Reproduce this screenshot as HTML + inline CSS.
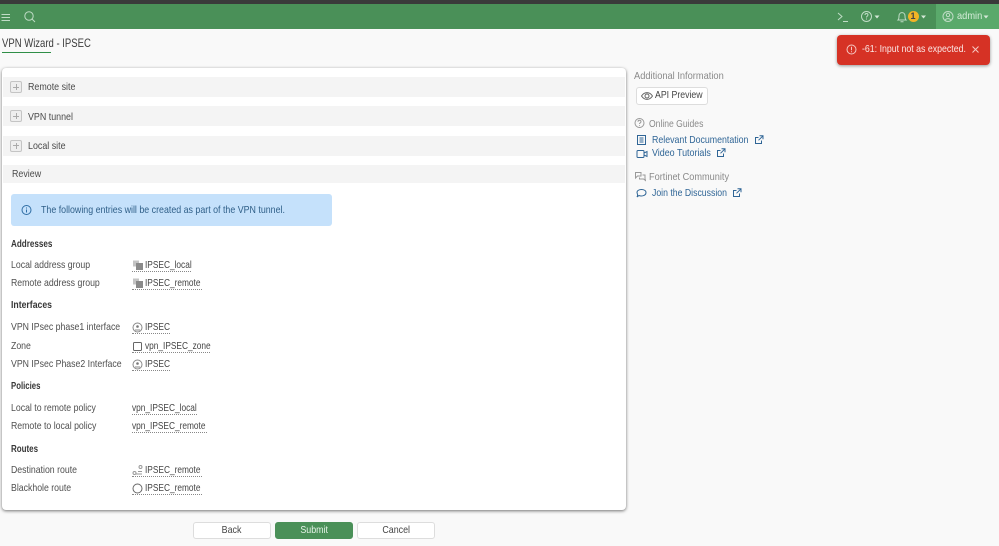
<!DOCTYPE html>
<html><head><meta charset="utf-8"><style>
html,body{margin:0;padding:0;width:999px;height:546px;overflow:hidden;background:#f9f9f9;font-family:"Liberation Sans",sans-serif;font-size:10.400px;color:#4a4a4a}
.a{position:absolute;white-space:nowrap;line-height:12px;transform-origin:0 50%;transform:scaleX(calc(var(--s,.89)*.96))}
.box{position:absolute}
.lab{position:absolute;left:11px;margin-top:1px;white-space:nowrap;line-height:12px;color:#4f4f4f;transform-origin:0 50%;transform:scaleX(.84)}
.hd{position:absolute;left:11px;margin-top:0.500px;white-space:nowrap;line-height:12px;color:#383838;font-weight:bold;transform-origin:0 50%;transform:scaleX(calc(var(--s,.82)*.96))}
.val{position:absolute;left:132px;margin-top:1px;height:11px;line-height:12px;white-space:nowrap;color:#444;border-bottom:1px dotted #888}
.val span{position:absolute;left:13px;top:0;transform-origin:0 50%;transform:scaleX(.8)}
.val svg{position:absolute;left:0;top:0}
.sec{position:absolute;left:3px;width:622px;height:20px;background:#f4f4f4}
.sec b{position:absolute;left:25px;top:4px;font-weight:normal;line-height:12px;color:#4a4a4a;transform-origin:0 50%;transform:scaleX(.855);margin-top:1px}
.pl{position:absolute;left:7px;top:4px;width:10px;height:10px;border:1px solid #c4c4c4;border-radius:2px;background:#eee}
.pl:before{content:"";position:absolute;left:2px;top:4.500px;width:6px;height:1px;background:#aaa}
.pl:after{content:"";position:absolute;left:4.500px;top:2px;width:1px;height:6px;background:#aaa}
.btn{position:absolute;top:522px;width:76px;height:15px;border:1px solid #ddd;border-radius:3px;background:#fff;text-align:center;line-height:16px;color:#444}
.btn span{display:inline-block;transform:scaleX(.855)}
.lnk{color:#2f6596}
</style></head><body>
<div class="box" style="left:0;top:0;width:999px;height:4px;background:#3a3a3a"></div>
<div class="box" style="left:0;top:4px;width:999px;height:25px;background:#4a9058"></div>
<div class="box" style="left:936px;top:4px;width:63px;height:25px;background:#5aa96b"></div>
<svg class="box" style="left:0;top:4px" width="999" height="25" fill="none" stroke="#c0dcc6" stroke-width="1">
<path d="M1.500 10.500h8.500M1.500 13.500h8.500M1.500 16.500h8.500"/>
<circle cx="29" cy="12" r="4.200"/><path d="M32 15l3 3"/>
<path d="M838 9l4 3.500-4 3.500M843 17.500h5"/>
<circle cx="866.500" cy="12.500" r="5"/>
<path d="M865 11c0-2 3-2 3 0 0 1-1.500 1-1.500 2.500M866.500 14.500v1"/>
<path d="M874.500 11.500h5l-2.500 3z" fill="#d5e8d8" stroke="none"/>
<path d="M898 16c1-1 1-2 1-4 0-4.500 6-4.500 6 0 0 2 0 3 1 4zM900.500 17.800h3"/>
<path d="M921 11.500h5l-2.500 3z" fill="#d5e8d8" stroke="none"/>
<circle cx="948" cy="12.500" r="5"/><circle cx="948" cy="11" r="1.700"/><path d="M945 16.500c1-2.500 5-2.500 6 0"/>
<path d="M983.500 11.500h5l-2.500 3z" fill="#d5e8d8" stroke="none"/>
</svg>
<div class="box" style="left:907.500px;top:11px;width:11px;height:11px;border-radius:50%;background:#f2b426;color:#444;font-size:9px;line-height:11px;text-align:center;font-weight:bold">1</div>
<div class="a" style="left:956.500px;top:11px;color:#d5ecd9;--s:.93">admin</div>

<div class="a" style="left:2px;top:36px;font-size:12px;line-height:14px;color:#3c3c3c;--s:.826">VPN Wizard - IPSEC</div>
<div class="box" style="left:2px;top:52px;width:49px;height:1px;background:#2f8f47"></div>

<div class="box" style="left:2px;top:68px;width:624px;height:442px;background:#fff;border-radius:4px;box-shadow:0 1px 3px rgba(0,0,0,.55)"></div>
<div class="sec" style="top:77px"><i class="pl"></i><b>Remote site</b></div>
<div class="sec" style="top:106px"><i class="pl"></i><b style="top:4.500px">VPN tunnel</b></div>
<div class="sec" style="top:135.500px"><i class="pl"></i><b>Local site</b></div>
<div class="sec" style="top:165px;height:18px"><b style="left:9px;top:3px">Review</b></div>

<div class="box" style="left:11px;top:194px;width:321px;height:32px;background:#c5e1fb;border-radius:3px"></div>
<svg class="box" style="left:21px;top:204px" width="12" height="12" fill="none" stroke="#2f6ea5"><circle cx="5.500" cy="6" r="4.500"/><path d="M5.500 5.500v3M5.500 3.500v1"/></svg>
<div class="a" style="left:41px;top:204.500px;color:#2f5f88;--s:.887">The following entries will be created as part of the VPN tunnel.</div>

<div class="hd" style="top:238px;--s:.81">Addresses</div>
<div class="lab" style="top:259px">Local address group</div>
<div class="val" style="top:259px;width:59px"><svg width="12" height="12"><rect x="1" y="0.500" width="6" height="6" fill="#c4c4c4"/><rect x="4" y="3" width="7" height="7" fill="#8a8a8a"/></svg><span>IPSEC_local</span></div>
<div class="lab" style="top:277px">Remote address group</div>
<div class="val" style="top:277px;width:70px"><svg width="12" height="12"><rect x="1" y="0.500" width="6" height="6" fill="#c4c4c4"/><rect x="4" y="3" width="7" height="7" fill="#8a8a8a"/></svg><span>IPSEC_remote</span></div>

<div class="hd" style="top:299px;--s:.87">Interfaces</div>
<div class="lab" style="top:321px">VPN IPsec phase1 interface</div>
<div class="val" style="top:321px;width:38px"><svg width="12" height="12" fill="none" stroke="#888"><circle cx="5.500" cy="5.500" r="4.500"/><circle cx="5.500" cy="4.500" r="1.300" fill="#777" stroke="none"/><path d="M3 8h5"/></svg><span>IPSEC</span></div>
<div class="lab" style="top:340px">Zone</div>
<div class="val" style="top:340px;width:78px"><svg width="12" height="12"><rect x="1.500" y="1.500" width="8" height="8" rx="1" fill="#fff" stroke="#666"/></svg><span>vpn_IPSEC_zone</span></div>
<div class="lab" style="top:358px">VPN IPsec Phase2 Interface</div>
<div class="val" style="top:358px;width:38px"><svg width="12" height="12" fill="none" stroke="#888"><circle cx="5.500" cy="5.500" r="4.500"/><circle cx="5.500" cy="4.500" r="1.300" fill="#777" stroke="none"/><path d="M3 8h5"/></svg><span>IPSEC</span></div>

<div class="hd" style="top:380px;--s:.78">Policies</div>
<div class="lab" style="top:402px">Local to remote policy</div>
<div class="val" style="top:402px;width:65px"><span style="left:0">vpn_IPSEC_local</span></div>
<div class="lab" style="top:420px">Remote to local policy</div>
<div class="val" style="top:420px;width:75px"><span style="left:0">vpn_IPSEC_remote</span></div>

<div class="hd" style="top:443px;--s:.8">Routes</div>
<div class="lab" style="top:464px">Destination route</div>
<div class="val" style="top:464px;width:70px"><svg width="12" height="12" fill="none" stroke="#999"><circle cx="2.500" cy="8" r="1.500"/><circle cx="8.500" cy="2" r="1.500"/><path d="M4 9h6M6 6.500h4"/></svg><span>IPSEC_remote</span></div>
<div class="lab" style="top:482px">Blackhole route</div>
<div class="val" style="top:482px;width:70px"><svg width="12" height="12" fill="none" stroke="#666"><circle cx="5.500" cy="5.500" r="4.500"/></svg><span>IPSEC_remote</span></div>

<div class="btn" style="left:193px"><span>Back</span></div>
<div class="btn" style="left:275px;background:#4a9058;border-color:#4a9058;color:#e6f2e8"><span>Submit</span></div>
<div class="btn" style="left:357px"><span>Cancel</span></div>

<div class="a" style="left:634px;top:71px;color:#8a8a8a;--s:.93">Additional Information</div>
<div class="box" style="left:636px;top:87px;width:70px;height:16px;border:1px solid #ddd;border-radius:3px;background:#fff"></div>
<svg class="box" style="left:641px;top:90px" width="12" height="12" fill="none" stroke="#666"><path d="M.5 6c3-4.500 8-4.500 11 0-3 4.500-8 4.500-11 0z"/><circle cx="6" cy="6" r="2"/></svg>
<div class="a" style="left:655px;top:90px;color:#444;--s:.875">API Preview</div>

<svg class="box" style="left:634px;top:117px" width="12" height="12" fill="none" stroke="#999"><circle cx="5.500" cy="6" r="4.500"/><path d="M4 4.800c0-2 3-2 3 0 0 1-1.500 1-1.500 2.200M5.500 8v.8"/></svg>
<div class="a" style="left:649px;top:119px;color:#8a8a8a;--s:.86">Online Guides</div>
<svg class="box" style="left:636px;top:134px" width="12" height="12" fill="none" stroke="#2f6596"><path d="M1.500 1.500h8v9h-8zM3.500 4h4M3.500 6h4M3.500 8h4"/></svg>
<div class="a lnk" style="left:652px;top:135px;--s:.883">Relevant Documentation</div>
<svg class="box" style="left:636px;top:148px" width="12" height="12" fill="none" stroke="#2f6596"><rect x="1" y="2.500" width="7" height="7" rx="1"/><path d="M8 5l3-1.500v5L8 7"/></svg>
<div class="a lnk" style="left:652px;top:148px;--s:.894">Video Tutorials</div>
<svg class="box" style="left:634px;top:171px" width="12" height="12" fill="none" stroke="#999"><path d="M1.500 1.500h5.500v3.500H3.500L1.500 7zM8.500 4h2.500v3.500l.5 2L9.500 8H5.500V6.500"/></svg>
<div class="a" style="left:649px;top:172px;color:#8a8a8a;--s:.92">Fortinet Community</div>
<svg class="box" style="left:636px;top:187px" width="12" height="12" fill="none" stroke="#2f6596"><path d="M1 5.500c0-4 9-4 9 0 0 3.500-5 4-7 3L1 10c.5-1 .8-2 .5-2.500z"/></svg>
<div class="a lnk" style="left:652px;top:188px;--s:.872">Join the Discussion</div>
<svg class="box" style="left:754px;top:135px" width="10" height="10" fill="none" stroke="#2f6596"><path d="M7.500 5.500v3h-6v-6h3M5.500.8h3.500v3.500M9 .8L4.500 5.300"/></svg>
<svg class="box" style="left:716px;top:148px" width="10" height="10" fill="none" stroke="#2f6596"><path d="M7.500 5.500v3h-6v-6h3M5.500.8h3.500v3.500M9 .8L4.500 5.300"/></svg>
<svg class="box" style="left:732px;top:188px" width="10" height="10" fill="none" stroke="#2f6596"><path d="M7.500 5.500v3h-6v-6h3M5.500.8h3.500v3.500M9 .8L4.500 5.300"/></svg>

<div class="box" style="left:837px;top:35px;width:153px;height:30px;background:#d63225;border-radius:4px;box-shadow:0 1px 3px rgba(0,0,0,.4)"></div>
<svg class="box" style="left:846px;top:44px" width="12" height="12" fill="none" stroke="#f5c9c4"><circle cx="5.500" cy="5.500" r="4.500"/><path d="M5.500 2.800v3.500M5.500 7.300v1"/></svg>
<div class="a" style="left:862px;top:44px;color:#fbe8e6;--s:.88">-61: Input not as expected.</div>
<svg class="box" style="left:971px;top:45px" width="9" height="9" fill="none" stroke="#f5c9c4"><path d="M1.500 1.500l6 6M7.500 1.500l-6 6"/></svg>
</body></html>
